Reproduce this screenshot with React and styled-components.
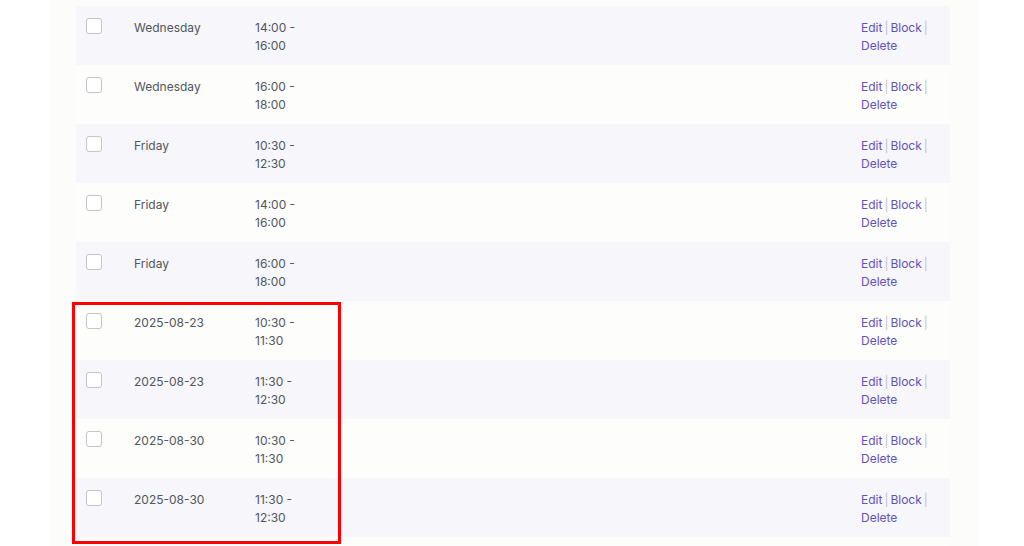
import React from "react";
import styled, { createGlobalStyle } from "styled-components";

const GlobalStyle = createGlobalStyle`
  html, body {
    margin: 0;
    padding: 0;
    background: #ffffff;
    overflow: hidden;
  }
  body {
    font-family: Inter, "Noto Sans", "Liberation Sans", sans-serif;
  }
`;

const slots = [
  { day: "Wednesday", from: "14:00", to: "16:00" },
  { day: "Wednesday", from: "16:00", to: "18:00" },
  { day: "Friday", from: "10:30", to: "12:30" },
  { day: "Friday", from: "14:00", to: "16:00" },
  { day: "Friday", from: "16:00", to: "18:00" },
  { day: "2025-08-23", from: "10:30", to: "11:30" },
  { day: "2025-08-23", from: "11:30", to: "12:30" },
  { day: "2025-08-30", from: "10:30", to: "11:30" },
  { day: "2025-08-30", from: "11:30", to: "12:30" },
];

function App() {
  return (
    <>
      <GlobalStyle />
      <Page>
        <Panel>
          <Table>
            {slots.map((slot, i) => (
              <Row key={i} odd={i % 2 === 0}>
                <CheckCell>
                  <Checkbox type="checkbox" />
                </CheckCell>
                <DayCell>{slot.day}</DayCell>
                <TimeCell>
                  {slot.from} - {slot.to}
                </TimeCell>
                <Spacer />
                <Actions>
                  <a href="#">Edit</a>
                  <Sep>|</Sep>
                  <wbr />
                  <a href="#">Block</a>
                  <Sep>|</Sep>
                  <wbr />
                  <a href="#">Delete</a>
                </Actions>
              </Row>
            ))}
            <Row odd={false} />
          </Table>
          <Highlight />
        </Panel>
      </Page>
    </>
  );
}

export default App;

const Page = styled.div`
  height: 546px;
  overflow: hidden;
  padding-left: 50px;
`;

const Panel = styled.div`
  position: relative;
  width: 928px;
  height: 546px;
  overflow: hidden;
  box-sizing: border-box;
  background: #fcfcfa;
  padding: 6px 28px 0 26px;
`;

const Table = styled.div`
  display: flex;
  flex-direction: column;
`;

const Row = styled.div`
  display: grid;
  grid-template-columns: 58px 121px 80px 1fr 89px;
  flex: 0 0 59px;
  height: 59px;
  box-sizing: border-box;
  background: ${(props) => (props.odd ? "#f6f6fb" : "#fdfdfb")};
  font-size: 12px;
  line-height: 18px;
  color: #50575e;
`;

const CheckCell = styled.div`
  padding: 12px 0 0 10px;
`;

const Checkbox = styled.input`
  appearance: none;
  display: block;
  margin: 0;
  width: 16px;
  height: 16px;
  box-sizing: border-box;
  border: 1px solid #c3c4c7;
  border-radius: 3px;
  background: #ffffff;
`;

const DayCell = styled.div`
  padding-top: 13px;
`;

const TimeCell = styled.div`
  padding-top: 13px;
  width: 50px;
`;

const Spacer = styled.div``;

const Actions = styled.div`
  padding-top: 13px;
  width: 72px;
  a {
    color: #6253b8;
    text-decoration: none;
  }
`;

const Sep = styled.span`
  color: #c3c4c7;
  margin: 0 2px;
`;

const Highlight = styled.div`
  position: absolute;
  left: 22px;
  top: 302px;
  width: 269px;
  height: 242px;
  box-sizing: border-box;
  border: 3px solid #ff0000;
  pointer-events: none;
`;
